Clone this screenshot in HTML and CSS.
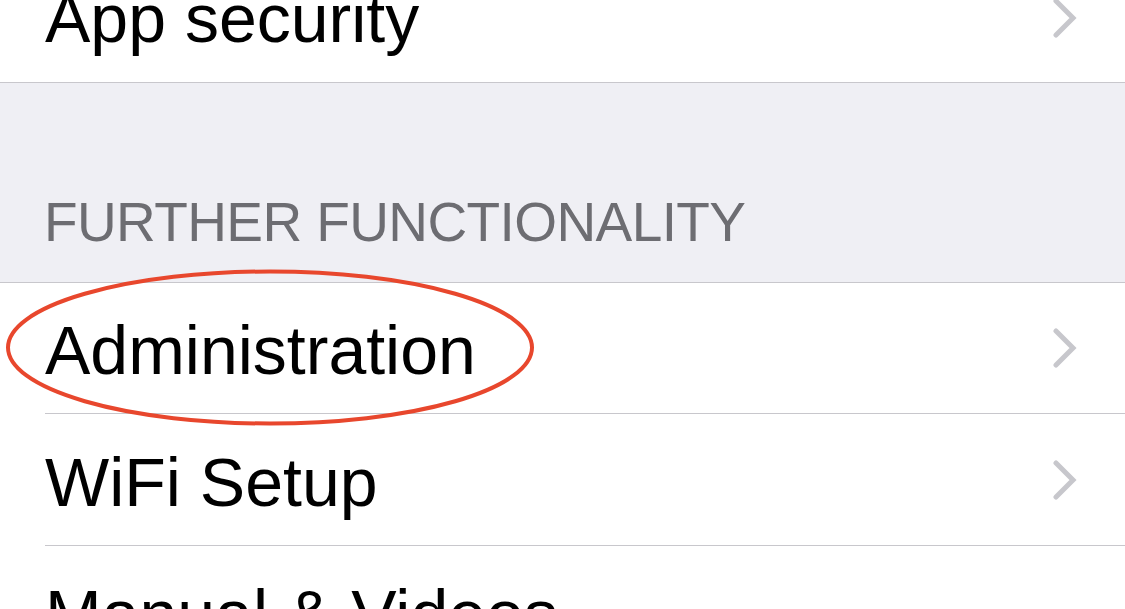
FILE: index.html
```html
<!DOCTYPE html>
<html lang="en">
<head>
    <meta charset="UTF-8">
    <meta name="viewport" content="width=device-width, initial-scale=1.0">
    <title>Settings</title>
    <link rel="stylesheet" href="styles.css">
</head>
<body>
    <div class="screen">
        <div class="group">
            <div class="row row-first row-last">
                <span class="label">App security</span>
                <svg class="chevron" viewBox="0 0 26 40"><polyline points="4,3 21,20 4,37"/></svg>
            </div>
        </div>

        <div class="section-header">
            <span>FURTHER FUNCTIONALITY</span>
        </div>

        <div class="group group-main">
            <div class="row">
                <span class="label">Administration</span>
                <svg class="chevron" viewBox="0 0 26 40"><polyline points="4,3 21,20 4,37"/></svg>
            </div>
            <div class="row">
                <span class="label">WiFi Setup</span>
                <svg class="chevron" viewBox="0 0 26 40"><polyline points="4,3 21,20 4,37"/></svg>
            </div>
            <div class="row">
                <span class="label">Manual &amp; Videos</span>
            </div>
        </div>

        <!-- red marker drawn over the screenshot -->
        <svg class="marker" viewBox="0 0 1125 609">
            <ellipse cx="270" cy="347.5" rx="262" ry="76"/>
        </svg>
    </div>
</body>
</html>
```

FILE: styles.css
```css
body {
    margin: 0;
    background-color: white;
    font-family: 'Liberation Sans', Arial, sans-serif;
    overflow: hidden;
}
.screen {
    position: relative;
    width: 1125px;
    height: 609px;
    overflow: hidden;
}
.group {
    background-color: white;
}
.row {
    display: flex;
    align-items: center;
    justify-content: space-between;
    height: 131px;
    margin-left: 45px;
    padding-right: 47px;
    border-bottom: 1px solid #c8c7cc;
}
.group-main .row:first-child {
    height: 130px;
}
.group-main .label {
    padding-top: 4px;
}
.row-first {
    margin-top: -47px;
    height: 129px;
}
.row-last {
    margin-left: 0;
    padding-left: 45px;
}
.label {
    font-size: 68px;
    line-height: 1;
    color: #000;
    white-space: nowrap;
}
.chevron {
    width: 26px;
    height: 40px;
    flex-shrink: 0;
}
.chevron polyline {
    fill: none;
    stroke: #c7c7cc;
    stroke-width: 5;
    stroke-linecap: round;
    stroke-linejoin: miter;
}
.section-header {
    display: flex;
    align-items: flex-end;
    height: 167px;
    padding: 0 0 32px 44px;
    background-color: #efeff4;
    border-bottom: 1px solid #c8c7cc;
}
.section-header span {
    font-size: 55px;
    line-height: 1;
    letter-spacing: -0.6px;
    color: #6d6d72;
    white-space: nowrap;
}
.marker {
    position: absolute;
    left: 0;
    top: 0;
    width: 1125px;
    height: 609px;
    pointer-events: none;
}
.marker ellipse {
    fill: none;
    stroke: #e8472d;
    stroke-width: 4;
}
```
